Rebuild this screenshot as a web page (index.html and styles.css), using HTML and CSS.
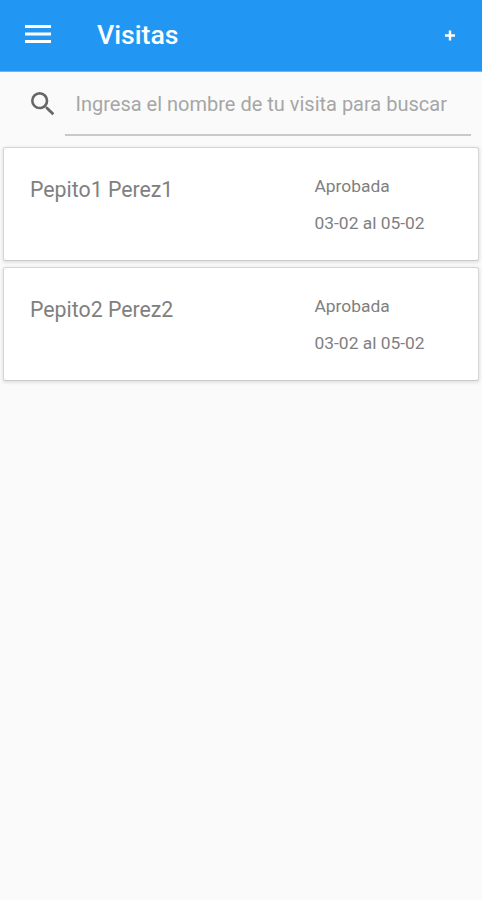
FILE: index.html
```html
<!DOCTYPE html>
<html lang="es">
<head>
  <meta charset="UTF-8">
  <meta name="viewport" content="width=device-width, initial-scale=1.0">
  <title>Visitas</title>
  <link rel="stylesheet" href="styles.css">
</head>
<body>
  <!-- Barra superior -->
  <header class="toolbar">
    <button class="menu-btn" aria-label="Menú">
      <svg width="26" height="18" viewBox="0 0 26 18"><path d="M0 0h26v3H0zM0 7.5h26v3H0zM0 15h26v3H0z" fill="#fff"/></svg>
    </button>
    <h1>Visitas</h1>
    <button class="add-btn" aria-label="Agregar">
      <svg width="10" height="11" viewBox="0 0 10 11"><path d="M3.8 .5h2.4v3.8H10v2.4H6.2v3.8H3.8V6.7H0V4.3h3.8z" fill="#fff"/></svg>
    </button>
  </header>

  <!-- Buscador -->
  <div class="search">
    <svg class="search-icon" width="32" height="32" viewBox="0 0 24 24"><path d="M15.5 14h-.79l-.28-.27A6.471 6.471 0 0 0 16 9.5 6.5 6.5 0 1 0 9.5 16c1.61 0 3.09-.59 4.23-1.57l.27.28v.79l5 4.99L20.49 19l-4.99-5zm-6 0C7.01 14 5 11.99 5 9.5S7.01 5 9.5 5 14 7.01 14 9.5 11.99 14 9.5 14z" fill="#666"/></svg>
    <input type="text" placeholder="Ingresa el nombre de tu visita para buscar">
  </div>

  <!-- Lista de visitas -->
  <main class="list">
    <div class="card">
      <div class="name">Pepito1 Perez1</div>
      <div class="info">
        <p>Aprobada</p>
        <p>03-02 al 05-02</p>
      </div>
    </div>
    <div class="card">
      <div class="name">Pepito2 Perez2</div>
      <div class="info">
        <p>Aprobada</p>
        <p>03-02 al 05-02</p>
      </div>
    </div>
  </main>
</body>
</html>
```
FILE: styles.css
```css
* {
  box-sizing: border-box;
}
body {
  margin: 0;
  min-height: 100vh;
  background-color: #fafafa;
  font-family: Roboto, sans-serif;
  color: #808080;
}
button {
  padding: 0;
  border: none;
  background: none;
  display: flex;
}
.toolbar {
  display: flex;
  align-items: center;
  height: 72px;
  padding: 0 27px 1px 25px;
  border-bottom: 1px solid #68b7f3;
  background-color: #2196f3;
}
.menu-btn {
  margin-bottom: 2px;
}
.toolbar h1 {
  flex: 1;
  margin: 0 0 1px 46px;
  font-size: 26.7px;
  font-weight: 500;
  color: #fff;
}
.search {
  display: flex;
  height: 64px;
  padding: 0 11px 0 27px;
}
.search-icon {
  margin-top: 16px;
}
.search input {
  flex: 1;
  min-width: 0;
  margin-left: 6px;
  padding: 1px 0 0 10.5px;
  border: none;
  border-bottom: 2px solid #c9c9c9;
  background: none;
  outline: none;
  font-family: inherit;
  font-size: 20px;
}
.search input::placeholder {
  color: #a6a6a6;
}
.list {
  display: flex;
  flex-direction: column;
  gap: 6px;
  padding: 11px 3px;
}
.card {
  display: flex;
  height: 114px;
  padding: 28px 0 0 26px;
  border: 1px solid #d6d6d6;
  border-bottom-color: #cacaca;
  border-radius: 3px;
  background-color: #fff;
  box-shadow: 0 1px 3px 1px rgba(0, 0, 0, 0.09);
}
.name {
  width: 284.5px;
  padding-top: 1px;
  font-size: 21.3px;
  line-height: 26px;
}
.info p {
  margin: 0 0 17px;
  font-size: 17.4px;
  line-height: 20px;
}
```
